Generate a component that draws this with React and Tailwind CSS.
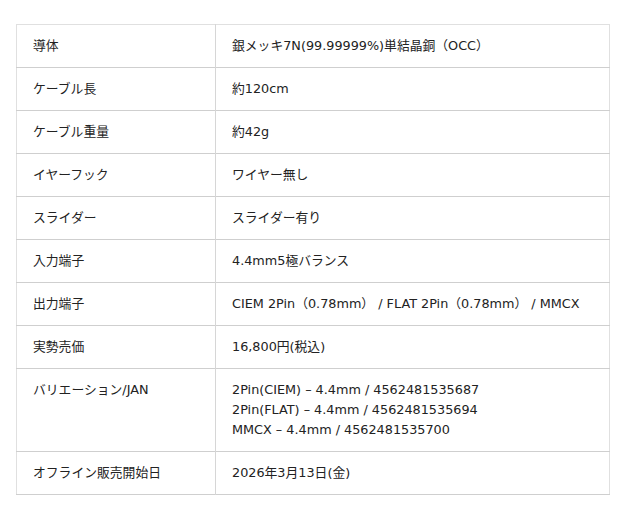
const specs = [
  ['導体', ['銀メッキ7N(99.99999%)単結晶銅（OCC）']],
  ['ケーブル長', ['約120cm']],
  ['ケーブル重量', ['約42g']],
  ['イヤーフック', ['ワイヤー無し']],
  ['スライダー', ['スライダー有り']],
  ['入力端子', ['4.4mm5極バランス']],
  ['出力端子', ['CIEM 2Pin（0.78mm） / FLAT 2Pin（0.78mm） / MMCX']],
  ['実勢売価', ['16,800円(税込)']],
  [
    'バリエーション/JAN',
    [
      '2Pin(CIEM) – 4.4mm / 4562481535687',
      '2Pin(FLAT) – 4.4mm / 4562481535694',
      'MMCX – 4.4mm / 4562481535700',
    ],
  ],
  ['オフライン販売開始日', ['2026年3月13日(金)']],
]

export default function App() {
  return (
    <div className="w-[640px] h-[520px] bg-white pt-6 pl-4 font-['DejaVu_Sans','Noto_Sans_CJK_JP',sans-serif] text-[12.8px] leading-5 text-[#222]">
      <table className="w-[594px] border-collapse border border-[#e0e0e0]">
        <tbody>
          {specs.map(([label, values]) => (
            <tr key={label} className="border-b border-[#cfcfcf]">
              <th className="w-[199px] border-r border-[#d6d6d6] px-4 py-[11px] text-left align-top font-normal">
                {label}
              </th>
              <td className="px-4 py-[11px] align-top">
                {values.map((v) => (
                  <div key={v}>{v}</div>
                ))}
              </td>
            </tr>
          ))}
        </tbody>
      </table>
    </div>
  )
}
